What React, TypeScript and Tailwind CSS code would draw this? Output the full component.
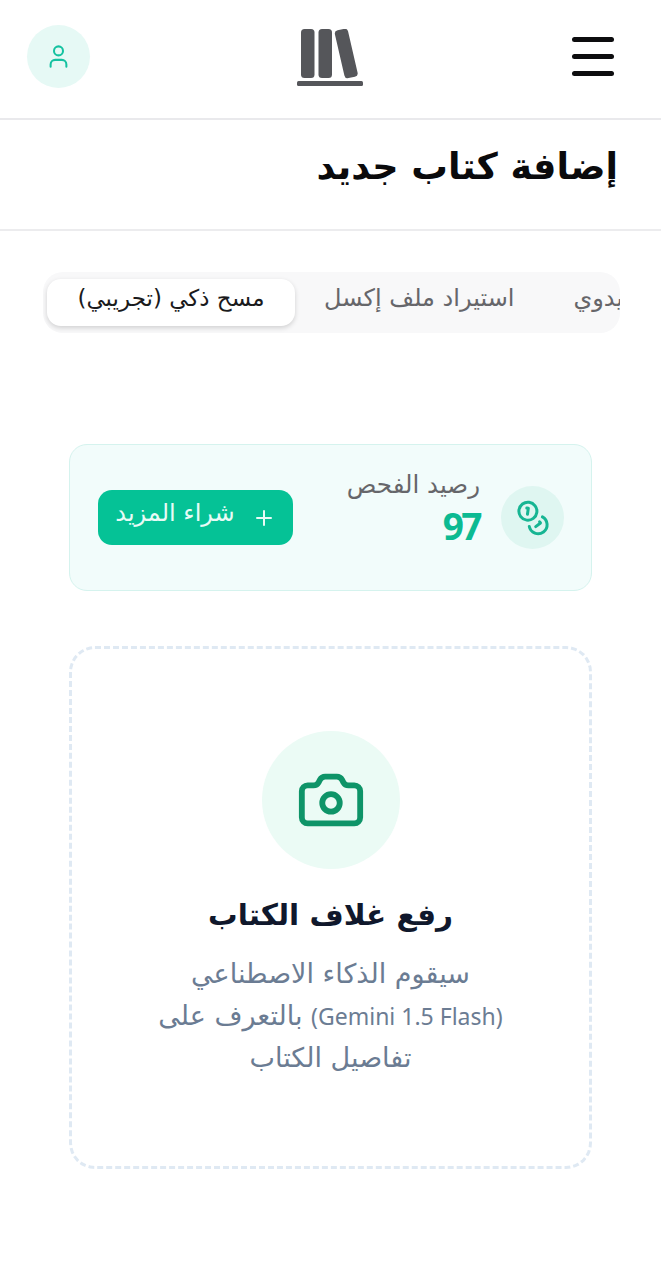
import { Camera, Coins, Plus, User } from "lucide-react";

function Logo() {
  return (
    <svg width="66" height="58" viewBox="0 0 66 58" fill="#55565a">
      <rect x="4" y="0" width="13.5" height="49" rx="3.5" />
      <rect x="21.5" y="0" width="13.5" height="49" rx="3.5" />
      <rect x="42.5" y="0" width="13.5" height="49" rx="3.5" transform="rotate(-13 49.25 24.5)" />
      <rect x="0" y="52" width="66" height="5" rx="1.5" />
    </svg>
  );
}

export default function App() {
  return (
    <div
      dir="rtl"
      className="min-h-[1280px] w-[661px] bg-white font-['DejaVu_Sans',sans-serif]"
    >
      <header dir="ltr" className="flex h-[120px] items-center justify-between border-b-2 border-[#e9e9ec] pb-[6px] pl-[27px] pr-[47px]">
        <div className="flex h-[63px] w-[63px] items-center justify-center rounded-full bg-[#e6f9f5]">
          <User size={27} strokeWidth={1.8} className="text-[#14c2a0]" />
        </div>
        <div className="mr-[2px] mt-[3px]">
          <Logo />
        </div>
        <div className="flex w-[42px] flex-col gap-[12px]">
          <span className="h-[5px] rounded-full bg-[#0d0d0f]" />
          <span className="h-[5px] rounded-full bg-[#0d0d0f]" />
          <span className="h-[5px] rounded-full bg-[#0d0d0f]" />
        </div>
      </header>

      <div className="flex h-[111px] items-center border-b-2 border-[#ececee] pb-[15px] pr-[43px]">
        <h1 className="text-[36.5px] font-bold text-[#0a0a0c]">إضافة كتاب جديد</h1>
      </div>

      <div dir="ltr" className="ml-[43px] mr-[41px] mt-[41px] flex h-[61px] items-center overflow-hidden rounded-[20px] bg-[#f8f8f9] pl-[4px]">
        <div className="flex h-[47px] w-[248px] shrink-0 items-center justify-center rounded-[14px] bg-white pb-[9px] text-[23px] text-[#1a1a1c] shadow-[0_2px_5px_rgba(0,0,0,0.16)]" dir="rtl">
          مسح ذكي (تجريبي)
        </div>
        <div className="ml-[29px] shrink-0 pb-[9px] text-[24px] text-[#66666a]" dir="rtl">
          استيراد ملف إكسل
        </div>
        <div className="ml-[59px] shrink-0 whitespace-nowrap pb-[9px] text-[24px] text-[#66666a]" dir="rtl">
          إدخال يدوي
        </div>
      </div>

      <section dir="ltr" className="mx-auto mt-[111px] flex h-[147px] w-[523px] items-center justify-between rounded-[18px] border border-[#d5f3ee] bg-[#f2fcfb] pl-[28px] pr-[27px]">
        <button className="flex h-[55px] w-[195px] items-center justify-center gap-[17px] rounded-[14px] bg-[#05c296] text-[24px] text-[#e8fbf6]">
          <span dir="rtl" className="mb-[10px]">شراء المزيد</span>
          <Plus size={24} strokeWidth={2} />
        </button>
        <div className="flex items-center gap-[21px]">
          <div dir="rtl" className="mb-[17px] text-right">
            <div className="mb-[5px] text-[24.5px] leading-[28px] text-[#66666a]">رصيد الفحص</div>
            <div className="font-['Open_Sans',sans-serif] text-[37px] font-bold leading-[44px] tracking-[-2.5px] text-[#0cba92]">
              97
            </div>
          </div>
          <div className="flex h-[63px] w-[63px] items-center justify-center rounded-full bg-[#dff6f1]">
            <Coins size={36} strokeWidth={2} className="rotate-[8deg] text-[#17b593]" />
          </div>
        </div>
      </section>

      <section className="mx-auto mt-[55px] flex h-[523px] w-[523px] flex-col items-center rounded-[26px] border-[3px] border-dashed border-[#dfe9f3] pt-[82px]">
        <div className="flex h-[138px] w-[138px] items-center justify-center rounded-full bg-[#ebfbf5]">
          <Camera size={70} strokeWidth={2} className="text-[#0e9468]" />
        </div>
        <h2 className="mt-[24px] text-[29.5px] font-bold text-[#10182c]">رفع غلاف الكتاب</h2>
        <p className="mt-[16px] w-[400px] text-center text-[27px] leading-[41.5px] text-[#6b7c93]">
          سيقوم الذكاء الاصطناعي
          <br />
          <span className="font-['Noto_Sans',sans-serif] text-[23px]">(Gemini 1.5 Flash)</span> بالتعرف على
          <br />
          تفاصيل الكتاب
        </p>
      </section>
    </div>
  );
}
